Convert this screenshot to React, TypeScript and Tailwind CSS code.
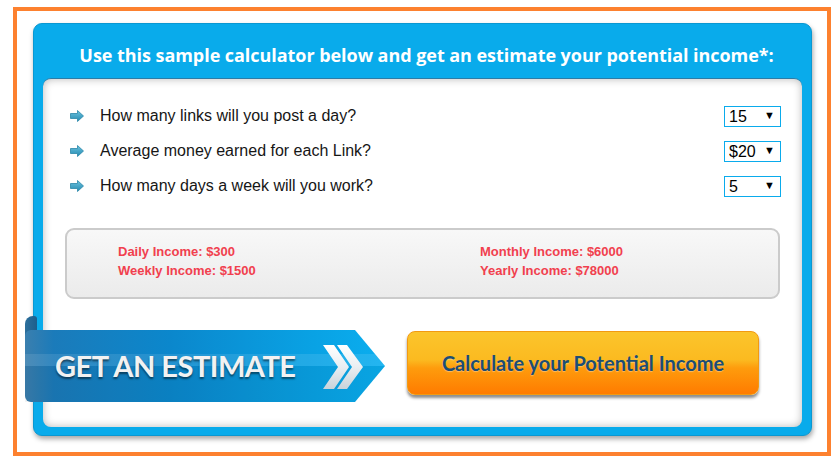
import React from 'react';

const questions = [
  { label: 'How many links will you post a day?', value: '15', options: ['5', '10', '15', '20', '25'] },
  { label: 'Average money earned for each Link?', value: '$20', options: ['$5', '$10', '$20', '$30'] },
  { label: 'How many days a week will you work?', value: '5', options: ['1', '2', '3', '4', '5', '6', '7'] },
];

const RowArrow = () => (
  <svg width="14" height="12" viewBox="0 0 14 12" className="shrink-0">
    <defs>
      <linearGradient id="arr" x1="0" y1="0" x2="0" y2="1">
        <stop offset="0" stopColor="#6cc3df" />
        <stop offset="1" stopColor="#2389b0" />
      </linearGradient>
    </defs>
    <polygon points="0.5,3.5 7.5,3.5 7.5,0.5 13.5,6 7.5,11.5 7.5,8.5 0.5,8.5" fill="url(#arr)" stroke="#2a86a8" strokeWidth="0.8" />
  </svg>
);

const Chevrons = () => (
  <svg width="44" height="44" viewBox="0 0 44 44">
    <defs>
      <linearGradient id="chev" x1="0" y1="0" x2="0" y2="1">
        <stop offset="0" stopColor="#ffffff" />
        <stop offset="0.5" stopColor="#e9eef2" />
        <stop offset="1" stopColor="#c9d3da" />
      </linearGradient>
    </defs>
    <polygon points="0,0 11,0 26,22 11,44 0,44 15,22" fill="url(#chev)" />
    <polygon points="14,0 24,0 40,22 24,44 14,44 29,22" fill="url(#chev)" />
  </svg>
);

const App = () => {
  return (
    <div className="min-h-screen bg-white" style={{ fontFamily: '"Liberation Sans", Arial, sans-serif' }}>
      <div className="ml-[13px] pt-[7px]">
        <div className="w-[818px] h-[449px] border-4 border-[#fd812f] bg-white pl-[16px] pt-[12px]">
          {/* Blue panel */}
          <div className="w-[779px] h-[413px] rounded-[9px] bg-[#09abeb] flex flex-col shadow-[1px_3px_5px_rgba(0,0,0,0.35)] border border-[#0a98d2]">
            <h2
              className="h-[54px] pt-[19px] pl-[8px] text-center text-white font-bold text-[18px] leading-[24px] tracking-[-0.05px]"
              style={{ fontFamily: '"Open Sans", sans-serif' }}
            >
              Use this sample calculator below and get an estimate your potential income*:
            </h2>

            {/* White panel */}
            <div className="mx-[9px] h-[349px] rounded-[8px] bg-white shadow-[inset_0_0_9px_rgba(0,0,0,0.28)] border-t border-[#2c7ca6] pt-[19px]">
              <div className="flex flex-col pl-[27px] pr-[21px]">
                {questions.map((q) => (
                  <div key={q.label} className="h-[35px] flex items-center justify-between">
                    <div className="flex items-center gap-[16px]">
                      <RowArrow />
                      <span className="text-[16px] text-[#161616]">{q.label}</span>
                    </div>
                    <div className="relative w-[57px] h-[21px]">
                      <select
                        defaultValue={q.value}
                        className="appearance-none w-full h-full border border-[#0aabec] bg-white pl-[4px] text-[16px] leading-[19px] text-black outline-none"
                      >
                        {q.options.map((o) => (
                          <option key={o} value={o}>
                            {o}
                          </option>
                        ))}
                      </select>
                      <span className="pointer-events-none absolute right-[6px] top-[4px] text-[11px] leading-[12px] text-black">▼</span>
                    </div>
                  </div>
                ))}
              </div>

              {/* Result box */}
              <div className="mx-[22px] mt-[25px] h-[71px] rounded-[9px] border-2 border-[#cbcbcb] bg-[linear-gradient(to_bottom,#f8f8f8,#ebebeb)] pl-[51px] pt-[12px] flex text-[13px] leading-[19px] font-bold text-[#f1404e]">
                <div className="w-[362px] flex flex-col">
                  <span>Daily Income: $300</span>
                  <span>Weekly Income: $1500</span>
                </div>
                <div className="flex flex-col">
                  <span>Monthly Income: $6000</span>
                  <span>Yearly Income: $78000</span>
                </div>
              </div>

              {/* Bottom row */}
              <div className="mt-[17px] flex items-start">
                <div className="relative -ml-[18px] w-[360px] h-[86px] shrink-0">
                  <div className="absolute left-0 top-0 w-[12px] h-[30px] rounded-tl-[8px] rounded-tr-[3px] bg-[linear-gradient(to_right,#2d6f9c,#1c5f8d)]" />
                  <div
                    className="absolute left-0 top-[14px] w-[360px] h-[72px] rounded-l-[6px] bg-[linear-gradient(to_right,#3b7fae_0%,#1b7bba_8%,#0b87cc_40%,#09a2e4_80%,#0aaeef_100%)]"
                    style={{ clipPath: 'polygon(0 0, 330px 0, 360px 50%, 330px 100%, 0 100%)' }}
                  >
                    <div className="absolute inset-x-0 top-[24px] h-[12px] bg-white/10" />
                    <div className="absolute inset-x-0 top-[36px] bottom-0 bg-black/5" />
                  </div>
                  <div className="absolute left-[30px] top-[14px] h-[72px] flex items-center">
                    <span
                      className="text-[29px] font-bold tracking-[-0.5px] text-[#f2f2f2] [text-shadow:0_2px_2px_rgba(0,0,0,0.5)]"
                      style={{ fontFamily: 'Lato, sans-serif' }}
                    >
                      GET AN ESTIMATE
                    </span>
                  </div>
                  <div className="absolute left-[298px] top-[29px]">
                    <Chevrons />
                  </div>
                </div>

                <button
                  className="ml-[22px] mt-[15px] w-[352px] h-[64px] rounded-[8px] border border-[#f29a12] bg-[linear-gradient(to_bottom,#fbc52c_0%,#fbba20_45%,#fe9c0d_58%,#ff7b00_100%)] shadow-[0_3px_3px_rgba(0,0,0,0.45)] text-[20px] font-bold text-[#1c4d75] [text-shadow:0_1px_1px_rgba(255,255,255,0.35)]"
                  style={{ fontFamily: 'Lato, sans-serif' }}
                >
                  Calculate your Potential Income
                </button>
              </div>
            </div>
          </div>
        </div>
      </div>
    </div>
  );
};

export default App;
